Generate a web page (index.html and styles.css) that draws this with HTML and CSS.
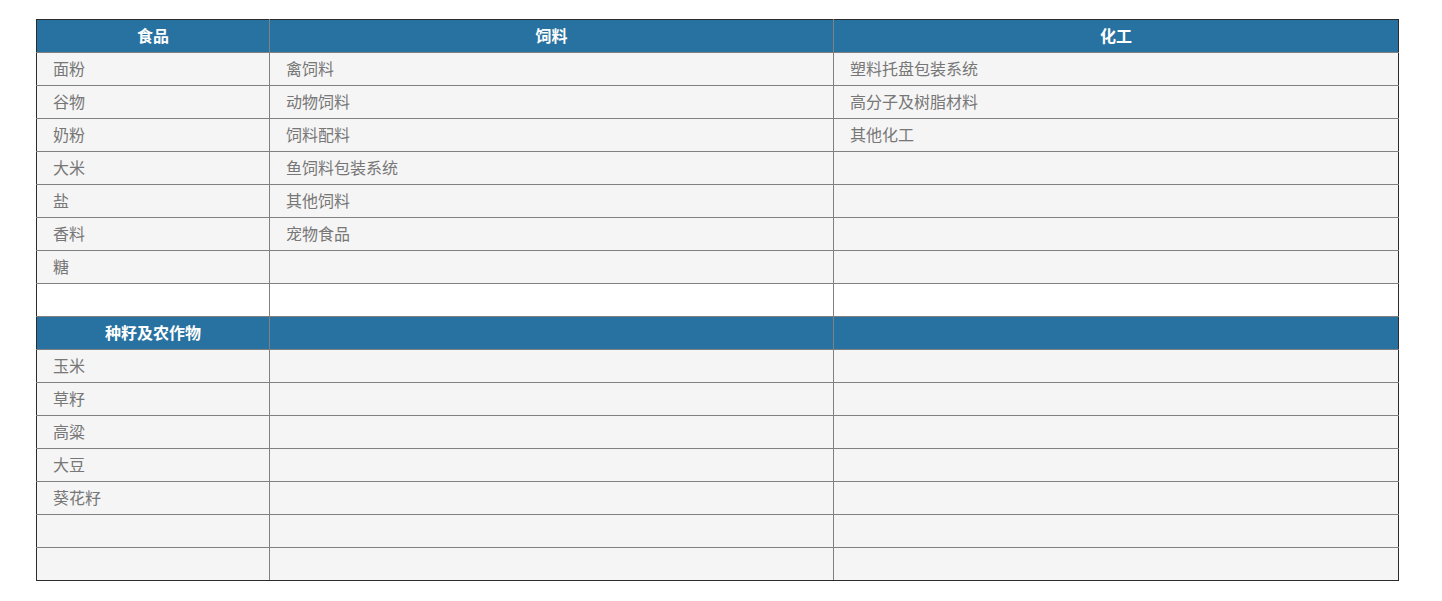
FILE: index.html
```html
<!DOCTYPE html>
<html lang="zh-CN">
<head>
<meta charset="utf-8">
<title>产品分类</title>
<link rel="stylesheet" href="styles.css">
</head>
<body>
<div class="wrap">
<table class="grid">
<colgroup><col class="c1"><col class="c2"><col class="c3"></colgroup>
<tr class="head"><th>食品</th><th>饲料</th><th>化工</th></tr>
<tr><td>面粉</td><td>禽饲料</td><td>塑料托盘包装系统</td></tr>
<tr><td>谷物</td><td>动物饲料</td><td>高分子及树脂材料</td></tr>
<tr><td>奶粉</td><td>饲料配料</td><td>其他化工</td></tr>
<tr><td>大米</td><td>鱼饲料包装系统</td><td></td></tr>
<tr><td>盐</td><td>其他饲料</td><td></td></tr>
<tr><td>香料</td><td>宠物食品</td><td></td></tr>
<tr><td>糖</td><td></td><td></td></tr>
<tr class="blank"><td></td><td></td><td></td></tr>
<tr class="head"><th>种籽及农作物</th><th></th><th></th></tr>
<tr><td>玉米</td><td></td><td></td></tr>
<tr><td>草籽</td><td></td><td></td></tr>
<tr><td>高粱</td><td></td><td></td></tr>
<tr><td>大豆</td><td></td><td></td></tr>
<tr><td>葵花籽</td><td></td><td></td></tr>
<tr><td></td><td></td><td></td></tr>
<tr><td></td><td></td><td></td></tr>
</table>
</div>
</body>
</html>
```

FILE: styles.css
```css
html, body {
  margin: 0;
  padding: 0;
  background: #ffffff;
}
.wrap {
  padding: 19px 0 0 36px;
}
.grid {
  border-collapse: collapse;
  width: 1362px;
  table-layout: fixed;
  font-family: "Noto Sans CJK SC", "Noto Sans", sans-serif;
  font-size: 16px;
}
.c1 { width: 233px; }
.c2 { width: 564px; }
.c3 { width: 565px; }
.grid td, .grid th {
  height: 33px;
  box-sizing: border-box;
  padding: 0 0 2px 16px;
  border: 1px solid #808080;
  line-height: 20px;
  vertical-align: middle;
}
.grid tr:first-child th { border-top-color: #2b2b2b; }
.grid tr:last-child td { border-bottom-color: #2b2b2b; }
.grid tr > :first-child { border-left-color: #2b2b2b; }
.grid tr > :last-child { border-right-color: #2b2b2b; }
.grid td {
  background: #f5f5f5;
  color: #777777;
  text-align: left;
}
.grid .head th {
  background: #2872a1;
  color: #ffffff;
  font-weight: bold;
  text-align: center;
  padding: 0 0 2px 0;
}
.grid .blank td {
  background: #ffffff;
}
```
